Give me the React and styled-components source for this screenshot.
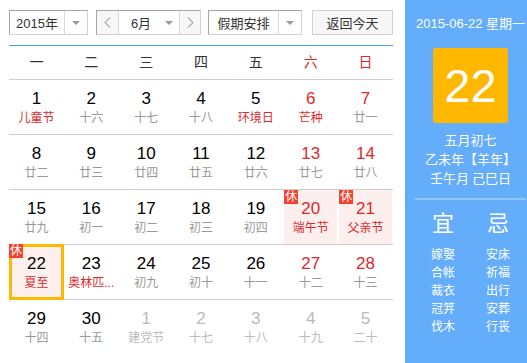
import React from "react";
import styled, {createGlobalStyle, css} from "styled-components";

const red = "#e0282b";
const gray = "#999";
const pale = "#bbb";

const GlobalStyle = createGlobalStyle`
    html, body {
        margin: 0;
        overflow: hidden;
        background: #fff;
        font-family: "Liberation Sans", "Noto Sans CJK SC", sans-serif;
    }
    * {
        box-sizing: border-box;
    }
`;

const Page = styled.div`
    width: 527px;
    height: 363px;
    display: flex;
    overflow: hidden;
`;

const Main = styled.div`
    width: 393px;
    flex-shrink: 0;
    padding: 10px 0 0 9px;
`;

const Toolbar = styled.div`
    display: flex;
    height: 25px;
`;

const Select = styled.div`
    display: flex;
    flex-shrink: 0;
    height: 25px;
    border: 1px solid;
    border-color: #a6a6a6 #d2d2d2 #d2d2d2 #a6a6a6;
    margin-right: ${props => props.gap || 0}px;
    font-size: 13px;
    color: #333;
    background: #fff;
`;

const SelectText = styled.div`
    width: ${props => props.w}px;
    display: flex;
    align-items: center;
    justify-content: center;
    gap: 14px;
    border-right: 1px solid #d9d9d9;
    ${props => props.last && css`
        border-right: none;
    `};
`;

const Caret = styled.span`
    width: 0;
    height: 0;
    border-left: 4px solid transparent;
    border-right: 4px solid transparent;
    border-top: 4px solid #999;
`;

const CaretBox = styled.div`
    width: 22px;
    display: flex;
    align-items: center;
    justify-content: center;
`;

const StepBtn = styled.div`
    width: 22px;
    display: flex;
    align-items: center;
    justify-content: center;
    background: #f7f7f7;
    border-right: 1px solid #d9d9d9;
    ${props => props.right && css`
        border-right: none;
        border-left: 1px solid #d9d9d9;
        width: 21px;
    `};
`;

const TodayBtn = styled.div`
    width: 81px;
    flex-shrink: 0;
    height: 25px;
    border: 1px solid #d2d2d2;
    background: #f7f7f7;
    font-size: 13px;
    color: #333;
    display: flex;
    align-items: center;
    justify-content: center;
`;

const WeekHead = styled.div`
    margin-top: 10px;
    border-top: 1px solid #4c9ff5;
    border-bottom: 1px solid #cdcdcd;
    display: grid;
    grid-template-columns: repeat(7, 1fr);
    height: 35px;
    line-height: 33px;
    font-size: 14px;
    text-align: center;
    color: #333;
`;

const WeekDay = styled.div`
    color: ${props => props.weekend ? red : "#333"};
`;

const Row = styled.div`
    display: grid;
    grid-template-columns: repeat(7, 1fr);
    height: 55px;
    border-bottom: 1px solid #cdcdcd;
    ${props => props.last && css`
        border-bottom: none;
    `};
`;

const Cell = styled.div`
    position: relative;
    margin: 0 1px;
    padding-top: 9px;
    text-align: center;
    ${props => props.rest && css`
        background: #fdefee;
    `};
    ${props => props.selected && css`
        z-index: 1;
        background: #fdf0ee;
        box-shadow: 0 0 0 1px #ffb900, inset 0 0 0 2px #ffb900;
    `};
`;

const DayNum = styled.div`
    font-size: 17px;
    line-height: 20px;
    color: ${props => props.color};
`;

const Lunar = styled.div`
    font-size: 12px;
    line-height: 18px;
    color: ${props => props.color};
    white-space: nowrap;
`;

const RestBadge = styled.span`
    position: absolute;
    top: ${props => props.selected ? -1 : 0}px;
    left: ${props => props.selected ? -1 : 0}px;
    width: 14px;
    height: 14px;
    background: #f5412e;
    color: #fff;
    font-size: 12px;
    line-height: 14px;
    text-align: center;
`;

const Side = styled.div`
    width: 131px;
    flex-shrink: 0;
    margin-left: 12px;
    background: #63adfa;
    color: #fff;
    display: flex;
    flex-direction: column;
    align-items: center;
    padding-top: 14px;
`;

const SideDate = styled.div`
    font-size: 13px;
    line-height: 20px;
    white-space: nowrap;
`;

const BigDay = styled.div`
    margin-top: 14px;
    width: 75px;
    height: 75px;
    border-radius: 3px;
    background: #ffb700;
    font-size: 47px;
    line-height: 75px;
    text-align: center;
`;

const LunarInfo = styled.div`
    margin-top: 7px;
    font-size: 13px;
    line-height: 19px;
    text-align: center;
    white-space: nowrap;
    font-family: "Noto Sans CJK SC", sans-serif;
`;

const Divider = styled.div`
    width: 111px;
    height: 2px;
    margin-top: 11px;
    background: rgba(255, 255, 255, 0.3);
`;

const Almanac = styled.div`
    display: grid;
    grid-template-columns: 55px 55px;
    text-align: center;
`;

const AlmanacTitle = styled.div`
    font-size: 22px;
    line-height: 30px;
    margin-top: 9px;
    margin-bottom: 7px;
`;

const AlmanacItem = styled.div`
    font-size: 12px;
    line-height: 18px;
`;

const Chevron = ({right}) => (
    <svg width="7" height="11" viewBox="0 0 7 11">
        <polyline
            points={right ? "1,0.5 6,5.5 1,10.5" : "6,0.5 1,5.5 6,10.5"}
            fill="none"
            stroke="#777"
            strokeWidth="1"
        />
    </svg>
);

// [day, lunar, flags] flags: w = weekend, f = festival, r = rest, o = other month, s = selected
const weeks = [
    [[1, "儿童节", "f"], [2, "十六"], [3, "十七"], [4, "十八"], [5, "环境日", "f"], [6, "芒种", "wf"], [7, "廿一", "w"]],
    [[8, "廿二"], [9, "廿三"], [10, "廿四"], [11, "廿五"], [12, "廿六"], [13, "廿七", "w"], [14, "廿八", "w"]],
    [[15, "廿九"], [16, "初一"], [17, "初二"], [18, "初三"], [19, "初四"], [20, "端午节", "wfr"], [21, "父亲节", "wfr"]],
    [[22, "夏至", "frs"], [23, "奥林匹...", "f"], [24, "初九"], [25, "初十"], [26, "十一"], [27, "十二", "w"], [28, "十三", "w"]],
    [[29, "十四"], [30, "十五"], [1, "建党节", "o"], [2, "十七", "o"], [3, "十八", "o"], [4, "十九", "o"], [5, "二十", "o"]],
];

const yi = ["嫁娶", "合帐", "裁衣", "冠笄", "伐木"];
const ji = ["安床", "祈福", "出行", "安葬", "行丧"];

const DayCell = ({day}) => {
    const [num, lunar, flags = ""] = day;
    const other = flags.includes("o");
    const numColor = other ? pale : flags.includes("w") ? red : "#000";
    const lunarColor = other ? pale : flags.includes("f") ? red : gray;
    const selected = flags.includes("s");
    return (
        <Cell rest={flags.includes("r")} selected={selected}>
            {flags.includes("r") && <RestBadge selected={selected}>休</RestBadge>}
            <DayNum color={numColor}>{num}</DayNum>
            <Lunar color={lunarColor}>{lunar}</Lunar>
        </Cell>
    );
};

const App = () => {
    return (
        <Page>
            <GlobalStyle/>
            <Main>
                <Toolbar>
                    <Select gap={8}>
                        <SelectText w={55}>2015年</SelectText>
                        <CaretBox><Caret/></CaretBox>
                    </Select>
                    <Select gap={7}>
                        <StepBtn><Chevron/></StepBtn>
                        <SelectText w={60} last>
                            <span style={{marginLeft: 6}}>6月</span>
                            <Caret/>
                        </SelectText>
                        <StepBtn right><Chevron right/></StepBtn>
                    </Select>
                    <Select gap={10}>
                        <SelectText w={70}>假期安排</SelectText>
                        <CaretBox><Caret/></CaretBox>
                    </Select>
                    <TodayBtn>返回今天</TodayBtn>
                </Toolbar>
                <WeekHead>
                    {["一", "二", "三", "四", "五", "六", "日"].map((d, i) =>
                        <WeekDay key={d} weekend={i > 4}>{d}</WeekDay>
                    )}
                </WeekHead>
                {weeks.map((week, i) =>
                    <Row key={i} last={i === weeks.length - 1}>
                        {week.map((day, j) => <DayCell key={j} day={day}/>)}
                    </Row>
                )}
            </Main>
            <Side>
                <SideDate>2015-06-22 星期一</SideDate>
                <BigDay>22</BigDay>
                <LunarInfo>
                    <div>五月初七</div>
                    <div>乙未年【羊年】</div>
                    <div>壬午月 己巳日</div>
                </LunarInfo>
                <Divider/>
                <Almanac>
                    <div>
                        <AlmanacTitle>宜</AlmanacTitle>
                        {yi.map(t => <AlmanacItem key={t}>{t}</AlmanacItem>)}
                    </div>
                    <div>
                        <AlmanacTitle>忌</AlmanacTitle>
                        {ji.map(t => <AlmanacItem key={t}>{t}</AlmanacItem>)}
                    </div>
                </Almanac>
            </Side>
        </Page>
    );
};

export default App;
